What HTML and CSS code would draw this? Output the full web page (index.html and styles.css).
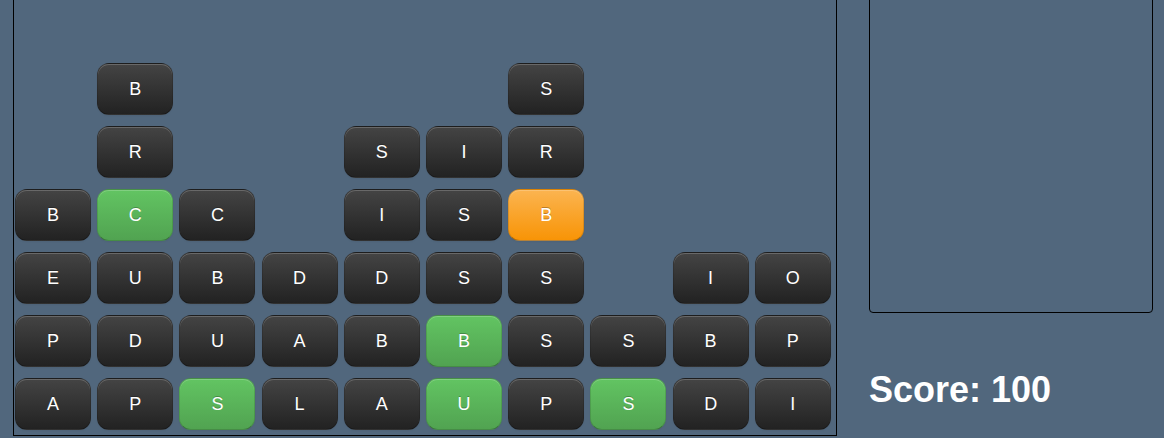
FILE: index.html
```html
<!DOCTYPE html>
<html>
<head>
<meta charset="utf-8">
<title>Word Tiles</title>
<link rel="stylesheet" href="styles.css">
</head>
<body>
<div class="page">
  <div class="board">
    <div class="col">
      <div class="tile">B</div>
      <div class="tile">E</div>
      <div class="tile">P</div>
      <div class="tile">A</div>
    </div>
    <div class="col">
      <div class="tile">B</div>
      <div class="tile">R</div>
      <div class="tile green">C</div>
      <div class="tile">U</div>
      <div class="tile">D</div>
      <div class="tile">P</div>
    </div>
    <div class="col">
      <div class="tile">C</div>
      <div class="tile">B</div>
      <div class="tile">U</div>
      <div class="tile green">S</div>
    </div>
    <div class="col">
      <div class="tile">D</div>
      <div class="tile">A</div>
      <div class="tile">L</div>
    </div>
    <div class="col">
      <div class="tile">S</div>
      <div class="tile">I</div>
      <div class="tile">D</div>
      <div class="tile">B</div>
      <div class="tile">A</div>
    </div>
    <div class="col">
      <div class="tile">I</div>
      <div class="tile">S</div>
      <div class="tile">S</div>
      <div class="tile green">B</div>
      <div class="tile green">U</div>
    </div>
    <div class="col">
      <div class="tile">S</div>
      <div class="tile">R</div>
      <div class="tile orange">B</div>
      <div class="tile">S</div>
      <div class="tile">S</div>
      <div class="tile">P</div>
    </div>
    <div class="col">
      <div class="tile">S</div>
      <div class="tile green">S</div>
    </div>
    <div class="col">
      <div class="tile">I</div>
      <div class="tile">B</div>
      <div class="tile">D</div>
    </div>
    <div class="col">
      <div class="tile">O</div>
      <div class="tile">P</div>
      <div class="tile">I</div>
    </div>
  </div>
  <div class="side">
    <div class="panel"></div>
    <div class="score">Score: 100</div>
  </div>
</div>
</body>
</html>
```

FILE: styles.css
```css
html, body {
  margin: 0;
  padding: 0;
  background: #51677d;
  overflow: hidden;
}

.page {
  display: flex;
  align-items: flex-start;
  padding-left: 13px;
  margin-top: -70px;
  font-family: "Liberation Sans", Arial, sans-serif;
}

.board {
  display: flex;
  width: 822px;
  height: 504px;
  border: 1px solid #000;
}

.col {
  flex: 1 1 0;
  display: flex;
  flex-direction: column;
  justify-content: flex-end;
}

.tile {
  box-sizing: border-box;
  width: 76px;
  height: 52px;
  margin: 6px 0 5px 1px;
  display: flex;
  align-items: center;
  justify-content: center;
  color: #fff;
  font-size: 18px;
  text-shadow: 0 -1px 0 rgba(0, 0, 0, 0.25);
  border-radius: 12px;
  border: 1px solid rgba(0, 0, 0, 0.12);
  border-bottom-color: rgba(0, 0, 0, 0.28);
  background-image: linear-gradient(to bottom, #444444, #222222);
  box-shadow: inset 0 1px 0 rgba(255, 255, 255, 0.2), 0 1px 2px rgba(0, 0, 0, 0.05);
}

.tile.green {
  background-image: linear-gradient(to bottom, #62c462, #51a351);
}

.tile.orange {
  background-image: linear-gradient(to bottom, #fbb450, #f89406);
}

.side {
  margin-left: 32px;
  display: flex;
  flex-direction: column;
}

.panel {
  box-sizing: border-box;
  width: 284px;
  height: 383px;
  border: 1px solid #000;
  border-radius: 4px;
}

.score {
  margin-top: 56px;
  color: #fff;
  font-size: 36px;
  font-weight: bold;
  line-height: 42px;
}
```
